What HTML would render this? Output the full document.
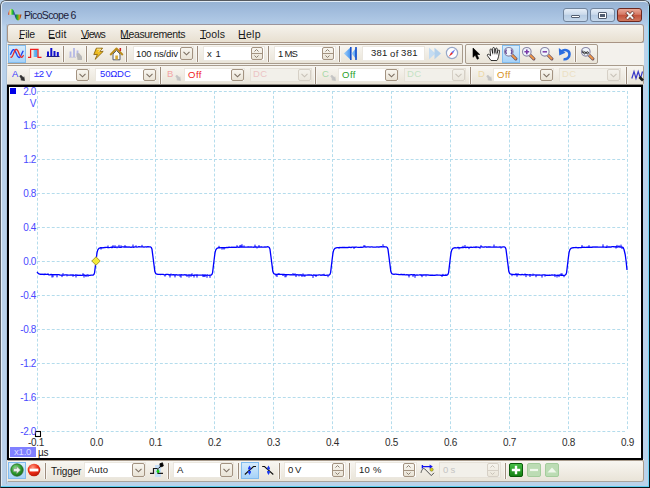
<!DOCTYPE html><html><head><meta charset="utf-8"><style>
*{margin:0;padding:0;box-sizing:border-box}
html,body{width:650px;height:488px;overflow:hidden;background:#b9d1ea}
body{font-family:"Liberation Sans",sans-serif;position:relative}
.a{position:absolute}
.lbl{position:absolute;font-size:10px;white-space:nowrap;line-height:12px;letter-spacing:-0.3px}
.tb{position:absolute;border:1px solid #a89b8c;border-radius:2px;background:linear-gradient(#f8f6f1,#efebe2 60%,#e9e4d8)}
.hl{position:absolute;border:1px solid #82bcee;background:linear-gradient(#d6ecfc,#a6d2f8)}
.yl{position:absolute;font-size:10px;color:#4a4aff;text-align:right;width:30px;letter-spacing:-0.4px;line-height:12px}
.xl{position:absolute;font-size:10px;color:#2c2c2c;letter-spacing:-0.3px;width:30px;text-align:center;line-height:12px}
.mi{position:absolute;top:28px;font-size:10.5px;color:#1a1a1a;letter-spacing:-0.35px;line-height:12px}
</style></head><body>
<div class="a" style="left:0;top:0;width:650px;height:488px;border:1px solid #565a60;border-bottom-color:#0c1418;border-right-color:#0c1418;border-radius:6px 6px 0 0;background:linear-gradient(#97b3d3 1px,#9fbadb 8px,#b1cae6 22px,#bad2ea 26px,#bad2ea)"></div><div class="a" style="left:1px;top:1px;width:648px;height:486px;border:1px solid #e2ecf6;border-bottom:none;border-right:none;border-radius:5px 5px 0 0"></div><div class="a" style="left:648px;top:6px;width:1px;height:481px;background:linear-gradient(#a8d8f0,#6fd6f6 20px)"></div><div class="a" style="left:1px;top:486px;width:648px;height:1px;background:#5ccff2"></div><div class="a" style="left:6px;top:24px;width:1px;height:460px;background:#a9c0d8"></div><svg class="a" style="left:7px;top:7px" width="16" height="16" viewBox="0 0 16 16">
<defs><linearGradient id="rg1" x1="0" x2="1" y1="0" y2="0"><stop offset="0" stop-color="#b81010"/><stop offset="0.3" stop-color="#f4eca0"/><stop offset="0.62" stop-color="#28c828"/><stop offset="1" stop-color="#1828b0"/></linearGradient>
<linearGradient id="rg2" x1="0" x2="1" y1="0" y2="0"><stop offset="0" stop-color="#1828b0"/><stop offset="0.38" stop-color="#20b020"/><stop offset="0.7" stop-color="#d0a020"/><stop offset="1" stop-color="#a01010"/></linearGradient></defs>
<path d="M1 7.8 C2 -0.2 6.8 -0.2 8 7.8 Z" fill="url(#rg1)"/><path d="M7.5 7.5 C8.6 15.4 13.6 15.4 14.4 7.5 Z" fill="url(#rg2)"/></svg><div class="a" style="left:24px;top:9px;font-size:10.5px;letter-spacing:-0.65px;line-height:12px;white-space:nowrap;color:#1c1c3a;">PicoScope 6</div><div class="a" style="left:563px;top:8px;width:25px;height:14px;border:1px solid #71849c;border-radius:3px;background:linear-gradient(#e6eef8,#cbdaeb 45%,#b5cbe3 50%,#c6d8eb)"><div class="a" style="left:7px;top:6px;width:9px;height:3px;background:#fff;border:1px solid #525e70;border-radius:1px"></div></div><div class="a" style="left:590px;top:8px;width:25px;height:14px;border:1px solid #71849c;border-radius:3px;background:linear-gradient(#e6eef8,#cbdaeb 45%,#b5cbe3 50%,#c6d8eb)"><div class="a" style="left:7px;top:3px;width:9px;height:7px;background:#fff;border:1px solid #525e70;border-radius:1px"><div class="a" style="left:1px;top:1px;width:5px;height:3px;background:#525e70"></div></div></div><div class="a" style="left:617px;top:8px;width:25px;height:14px;border:1px solid #6b2820;border-radius:3px;background:linear-gradient(#eaa898,#d57a66 45%,#c2503a 50%,#d0785e)"><svg class="a" style="left:7px;top:2px" width="10" height="9" viewBox="0 0 10 9"><path d="M1.5 1 L8.5 8 M8.5 1 L1.5 8" stroke="#62261c" stroke-width="3.4"/><path d="M1.8 1.2 L8.2 7.8 M8.2 1.2 L1.8 7.8" stroke="#f2f2f2" stroke-width="2"/></svg></div><div class="a" style="left:7px;top:24px;width:637px;height:19px;border:1px solid #a89484;border-top-color:#9c949a;border-radius:3px;background:linear-gradient(#f6f3ec,#ede7dc 60%,#e8e0d0)"></div><div class="a" style="left:19px;top:28px;font-size:10.5px;letter-spacing:-0.25px;line-height:12px;white-space:nowrap;color:#1a1a1a;">File</div><div class="a" style="left:19px;top:38px;width:5px;height:1px;background:#1a1a1a"></div><div class="a" style="left:48px;top:28px;font-size:10.5px;letter-spacing:0.1px;line-height:12px;white-space:nowrap;color:#1a1a1a;">Edit</div><div class="a" style="left:49px;top:38px;width:6px;height:1px;background:#1a1a1a"></div><div class="a" style="left:81px;top:28px;font-size:10.5px;letter-spacing:-0.75px;line-height:12px;white-space:nowrap;color:#1a1a1a;">Views</div><div class="a" style="left:81px;top:38px;width:7px;height:1px;background:#1a1a1a"></div><div class="a" style="left:120px;top:28px;font-size:10.5px;letter-spacing:-0.35px;line-height:12px;white-space:nowrap;color:#1a1a1a;">Measurements</div><div class="a" style="left:121px;top:38px;width:9px;height:1px;background:#1a1a1a"></div><div class="a" style="left:200px;top:28px;font-size:10.5px;letter-spacing:0.1px;line-height:12px;white-space:nowrap;color:#1a1a1a;">Tools</div><div class="a" style="left:200px;top:38px;width:6px;height:1px;background:#1a1a1a"></div><div class="a" style="left:238px;top:28px;font-size:10.5px;letter-spacing:0.35px;line-height:12px;white-space:nowrap;color:#1a1a1a;">Help</div><div class="a" style="left:239px;top:38px;width:7px;height:1px;background:#1a1a1a"></div><div class="a" style="left:7px;top:43px;width:637px;height:42px;background:#f3f1ec"></div><div class="a" style="left:7px;top:459px;width:637px;height:22px;background:#f3f1ec"></div><div class="tb" style="left:7px;top:44px;width:456px;height:20px;border-left-color:#f0ede6;border-radius:0 2px 2px 0"></div><div class="tb" style="left:465px;top:44px;width:133px;height:20px"></div><div class="hl" style="left:8px;top:45px;width:18px;height:18px"></div><svg class="a" style="left:8px;top:45px" width="18" height="18" viewBox="0 0 18 18">
<path d="M2.30,9.81 L2.80,8.71 L3.30,7.61 L3.80,6.59 L4.30,5.73 L4.80,5.10 L5.30,4.76 L5.80,4.73 L6.30,5.01 L6.80,5.58 L7.30,6.40 L7.80,7.39 L8.30,8.49 L8.80,9.59 L9.30,10.61 L9.80,11.47 L10.30,12.10 L10.80,12.44 L11.30,12.47 L11.80,12.19 L12.30,11.62 L12.80,10.80 L13.30,9.81 L13.80,8.71 L14.30,7.61 L14.80,6.59 L15.30,5.73" stroke="#2040f0" stroke-width="1.3" fill="none"/>
<path d="M2.50,12.13 L3.00,12.30 L3.50,12.13 L4.00,11.62 L4.50,10.82 L5.00,9.80 L5.50,8.66 L6.00,7.48 L6.50,6.37 L7.00,5.43 L7.50,4.74 L8.00,4.36 L8.50,4.33 L9.00,4.64 L9.50,5.27 L10.00,6.16 L10.50,7.25 L11.00,8.42 L11.50,9.58 L12.00,10.63 L12.50,11.48 L13.00,12.05 L13.50,12.29 L14.00,12.19 L14.50,11.74 L15.00,11.00 L15.50,10.02" stroke="#e82828" stroke-width="1.3" fill="none"/></svg><svg class="a" style="left:27px;top:47px" width="16" height="14" viewBox="0 0 16 14">
<defs><linearGradient id="pg" x1="0" x2="1"><stop offset="0" stop-color="#ffffff" stop-opacity="0"/><stop offset="0.5" stop-color="#70b8f0"/><stop offset="1" stop-color="#40a0e8"/></linearGradient></defs>
<rect x="4.5" y="3" width="6" height="7" fill="url(#pg)"/>
<path d="M1 10.3 H3.6 V2.3 H11 V10.3 H14.5" stroke="#f02020" stroke-width="1.25" fill="none"/></svg><svg class="a" style="left:45px;top:47px" width="16" height="14" viewBox="0 0 16 14">
<path d="M3 9 V4.5 M6.3 9 V1 M9.5 9 V4 M12.8 9 V5" stroke="#1010d0" stroke-width="2"/><path d="M1.5 9.5 H14.5" stroke="#202080" stroke-width="1"/></svg><div class="a" style="left:62px;top:46px;width:3px;height:16px;border-left:1px solid #f8f6f2;border-right:1px solid #f8f6f2;background:#9c8c7c"></div><svg class="a" style="left:68px;top:47px" width="16" height="14" viewBox="0 0 16 14">
<path d="M2.5 10 V4.5 M6 10 V1 M9.5 10 V3.5" stroke="#b4b8e6" stroke-width="1.8"/><path d="M1 10.3 H8" stroke="#c0c0d8" stroke-width="0.8"/>
<path d="M8.5 6.5 L11 6 L14 9.5 L14 13 L9.5 13 Z" fill="#b8b8b8"/></svg><div class="a" style="left:85px;top:46px;width:3px;height:16px;border-left:1px solid #f8f6f2;border-right:1px solid #f8f6f2;background:#9c8c7c"></div><svg class="a" style="left:92px;top:47px" width="13" height="13" viewBox="0 0 13 13">
<path d="M4.3 1.2 L10.6 1.2 L7.6 4.4 L11.2 4.4 L3.2 12.3 L5.4 7.4 L1.8 7.6 Z" fill="#eebc20" stroke="#8a6410" stroke-width="0.9" stroke-linejoin="round"/>
<path d="M5 2.2 L8.8 2.2 L6.6 5" stroke="#fff8c8" stroke-width="0.8" fill="none"/></svg><svg class="a" style="left:109px;top:47px" width="15" height="14" viewBox="0 0 15 14">
<path d="M4 12.8 V7 L7.5 3.5 L11 7 V12.8 Z" fill="#fbfbf6" stroke="#505a70" stroke-width="1"/>
<path d="M1.2 8 L7.5 1.5 L13.8 8" stroke="#b88a18" stroke-width="1.8" fill="none" stroke-linejoin="round"/>
<rect x="6.3" y="8.5" width="2.6" height="4" fill="#d8a830"/><rect x="10.5" y="1" width="1.6" height="3" fill="#d02020"/></svg><div class="a" style="left:125px;top:46px;width:3px;height:16px;border-left:1px solid #f8f6f2;border-right:1px solid #f8f6f2;background:#9c8c7c"></div><div class="a" style="left:133px;top:46px;width:61px;height:15px;background:#fff;border:1px solid #ebe7df"></div><div class="a" style="left:136px;top:48px;font-size:9.5px;letter-spacing:-0.15px;line-height:12px;white-space:nowrap;color:#1a1a1a;">100 ns/div</div><div class="a" style="left:180px;top:47px;width:13px;height:13px;border:1px solid #a39381;border-radius:2px;background:linear-gradient(#f8f6f0,#e9e3d6)"><svg class="a" style="left:2px;top:3px" width="7" height="5" viewBox="0 0 7 5"><path d="M0.5 0.8 L3.5 3.8 L6.5 0.8" stroke="#7c6f62" stroke-width="1.1" fill="none"/></svg></div><div class="a" style="left:196px;top:46px;width:3px;height:16px;border-left:1px solid #f8f6f2;border-right:1px solid #f8f6f2;background:#9c8c7c"></div><div class="a" style="left:203px;top:46px;width:62px;height:15px;background:#fff;border:1px solid #ebe7df"></div><div class="a" style="left:207px;top:48px;font-size:9.5px;letter-spacing:0.5px;line-height:12px;white-space:nowrap;color:#1a1a1a;">x 1</div><div class="a" style="left:251px;top:47px;width:12px;height:13px;border:1px solid #a39381;border-radius:2px;background:linear-gradient(#f8f6f0,#e9e3d6)"><div class="a" style="left:0;top:5px;width:10px;height:1px;background:#a39381"></div><svg class="a" style="left:2px;top:1px" width="5" height="3" viewBox="0 0 5 3"><path d="M0.5 2.5 L2.5 0.5 L4.5 2.5" stroke="#8c8072" stroke-width="1" fill="none"/></svg><svg class="a" style="left:2px;top:7px" width="5" height="3" viewBox="0 0 5 3"><path d="M0.5 0.5 L2.5 2.5 L4.5 0.5" stroke="#8c8072" stroke-width="1" fill="none"/></svg></div><div class="a" style="left:267px;top:46px;width:3px;height:16px;border-left:1px solid #f8f6f2;border-right:1px solid #f8f6f2;background:#9c8c7c"></div><div class="a" style="left:274px;top:46px;width:62px;height:15px;background:#fff;border:1px solid #ebe7df"></div><div class="a" style="left:278px;top:48px;font-size:9.5px;letter-spacing:-0.75px;line-height:12px;white-space:nowrap;color:#1a1a1a;">1 MS</div><div class="a" style="left:322px;top:47px;width:12px;height:13px;border:1px solid #a39381;border-radius:2px;background:linear-gradient(#f8f6f0,#e9e3d6)"><div class="a" style="left:0;top:5px;width:10px;height:1px;background:#a39381"></div><svg class="a" style="left:2px;top:1px" width="5" height="3" viewBox="0 0 5 3"><path d="M0.5 2.5 L2.5 0.5 L4.5 2.5" stroke="#8c8072" stroke-width="1" fill="none"/></svg><svg class="a" style="left:2px;top:7px" width="5" height="3" viewBox="0 0 5 3"><path d="M0.5 0.5 L2.5 2.5 L4.5 0.5" stroke="#8c8072" stroke-width="1" fill="none"/></svg></div><div class="a" style="left:338px;top:46px;width:3px;height:16px;border-left:1px solid #f8f6f2;border-right:1px solid #f8f6f2;background:#9c8c7c"></div><svg class="a" style="left:343px;top:46px" width="15" height="15" viewBox="0 0 15 15">
<defs><linearGradient id="ab" x1="0" x2="1" y1="0" y2="0"><stop offset="0" stop-color="#a8d4f8"/><stop offset="1" stop-color="#3c8ef0"/></linearGradient></defs>
<path d="M0.8 7.5 L8 1 V14 Z" fill="url(#ab)"/><path d="M7 1 H8.6 V14 H7 Z" fill="#1850c8"/>
<path d="M8.6 7.5 L13.5 1.5 V13.5 Z" fill="url(#ab)"/><path d="M12.2 1 H13.8 V14 H12.2 Z" fill="#1850c8"/></svg><div class="a" style="left:362px;top:46px;width:63px;height:15px;background:#fff;border:1px solid #ebe7df"></div><div class="a" style="left:371px;top:47px;font-size:9.5px;letter-spacing:0.25px;line-height:12px;white-space:nowrap;color:#1a1a1a;">381</div><div class="a" style="left:390px;top:48px;font-size:9.5px;letter-spacing:0.5px;line-height:12px;white-space:nowrap;color:#1a1a1a;">of</div><div class="a" style="left:401px;top:47px;font-size:9.5px;letter-spacing:0.4px;line-height:12px;white-space:nowrap;color:#1a1a1a;">381</div><svg class="a" style="left:428px;top:47px" width="15" height="13" viewBox="0 0 15 13">
<path d="M1 0.8 L7.5 6.5 L1 12.2 Z" fill="#c4dcf2"/><path d="M6.5 0.8 L13 6.5 L6.5 12.2 Z" fill="#b2d0ec"/></svg><svg class="a" style="left:445px;top:46px" width="14" height="14" viewBox="0 0 14 14">
<circle cx="7" cy="7" r="5.6" fill="#fdfdff" stroke="#98a8c8" stroke-width="1.2"/>
<path d="M10.3 3.3 L7.8 7.8 L6.2 6.2 Z" fill="#6070e8"/><path d="M3.7 10.7 L6.2 6.2 L7.8 7.8 Z" fill="#e82828"/></svg><svg class="a" style="left:472px;top:47px" width="9" height="14" viewBox="0 0 9 14">
<path d="M1 1 V10.3 L3.2 8.2 L5.2 12.3 L6.8 11.5 L4.9 7.5 L7.8 7.5 Z" fill="#000" stroke="#000" stroke-width="0.6" stroke-linejoin="round"/></svg><svg class="a" style="left:486px;top:46px" width="15" height="16" viewBox="0 0 15 16">
<path d="M5 14.5 L1.5 9.8 C0.8 8.8 2 7.6 3 8.5 L4.6 9.8 L4 4 C3.9 2.8 5.6 2.5 5.9 3.7 L6.7 7 L6.7 2.4 C6.7 1.2 8.5 1.2 8.6 2.4 L8.9 6.8 L9.6 2.8 C9.8 1.7 11.4 1.9 11.3 3.1 L11 7.3 L12 4.6 C12.4 3.6 13.9 3.9 13.6 5.1 L12.6 10.3 C12.1 12.6 11.3 14.5 10.9 14.5 Z" fill="#fff" stroke="#111" stroke-width="0.85" stroke-linejoin="round"/>
<path d="M6.7 7 V8.3 M8.9 6.8 V8.3 M11 7.3 V8.5" stroke="#111" stroke-width="0.7"/></svg><div class="hl" style="left:502px;top:45px;width:18px;height:18px"></div><svg class="a" style="left:503px;top:46px" width="15" height="15" viewBox="0 0 15 15">
<path d="M8.6 8.6 L12.8 12.8" stroke="#6a5060" stroke-width="3.2" stroke-linecap="round"/><path d="M8.6 8.6 L12.6 12.6" stroke="#f09848" stroke-width="2" stroke-linecap="round"/>
<circle cx="5.8" cy="5.8" r="4.3" fill="#f0f6fd" stroke="#8a88a8" stroke-width="1.15"/><path d="M3.4 3.6 L2.6 5.8 L3.4 8 M8.2 3.6 L9 5.8 L8.2 8" stroke="#6a4a98" stroke-width="1.4" fill="none"/></svg><svg class="a" style="left:521px;top:46px" width="15" height="15" viewBox="0 0 15 15">
<path d="M8.6 8.6 L12.8 12.8" stroke="#6a5060" stroke-width="3.2" stroke-linecap="round"/><path d="M8.6 8.6 L12.6 12.6" stroke="#f09848" stroke-width="2" stroke-linecap="round"/>
<circle cx="5.8" cy="5.8" r="4.3" fill="#f0f6fd" stroke="#8a88a8" stroke-width="1.15"/><path d="M3.4 5.8 H8.2 M5.8 3.4 V8.2" stroke="#7a3aa8" stroke-width="1.6"/></svg><svg class="a" style="left:539px;top:46px" width="15" height="15" viewBox="0 0 15 15">
<path d="M8.6 8.6 L12.8 12.8" stroke="#6a5060" stroke-width="3.2" stroke-linecap="round"/><path d="M8.6 8.6 L12.6 12.6" stroke="#f09848" stroke-width="2" stroke-linecap="round"/>
<circle cx="5.8" cy="5.8" r="4.3" fill="#f0f6fd" stroke="#8a88a8" stroke-width="1.15"/><path d="M3.6 5.8 H8" stroke="#7a3aa8" stroke-width="1.5"/></svg><svg class="a" style="left:558px;top:46px" width="14" height="15" viewBox="0 0 14 15">
<path d="M3.5 5.5 C6 3 11.5 3.5 11.5 8.2 C11.5 11.8 8.5 13.8 5.5 13.2" stroke="#2c6ee0" stroke-width="2.6" fill="none"/><path d="M0.8 2 L1.2 9.5 L7.5 6.8 Z" fill="#2c6ee0"/></svg><div class="a" style="left:574px;top:46px;width:3px;height:16px;border-left:1px solid #f8f6f2;border-right:1px solid #f8f6f2;background:#9c8c7c"></div><svg class="a" style="left:580px;top:46px" width="15" height="15" viewBox="0 0 15 15">
<path d="M8.6 8.6 L12.8 12.8" stroke="#6a5060" stroke-width="3.2" stroke-linecap="round"/><path d="M8.6 8.6 L12.6 12.6" stroke="#f09848" stroke-width="2" stroke-linecap="round"/>
<circle cx="5.8" cy="5.8" r="4.3" fill="#f0f6fd" stroke="#8a88a8" stroke-width="1.15"/><path d="M2.8 4.6 V7 M4.6 5.8 a0.9 1.1 0 1 0 0.01 0 M7.4 5.8 a0.9 1.1 0 1 0 0.01 0" stroke="#202020" stroke-width="1" fill="none"/></svg><div class="tb" style="left:7px;top:65px;width:637px;height:20px;border-left-color:#f0ede6;border-bottom-color:#c8beb0;border-radius:0 2px 2px 0"></div><div class="a" style="left:12px;top:68px;font-size:9.5px;letter-spacing:0.5px;line-height:12px;white-space:nowrap;color:#3a3aff;">A</div><svg class="a" style="left:19px;top:75px" width="6" height="6" viewBox="0 0 7 7"><path d="M0.8 1.2 L2.2 0 L5 2.8 L5.8 2 L6.6 6.6 L2 5.8 L2.8 5 Z" fill="#333" stroke="#333" stroke-width="0.6" stroke-linejoin="round"/></svg><div class="a" style="left:29px;top:68px;width:61px;height:14px;background:#fff;border:1px solid #ebe7df"></div><div class="a" style="left:34px;top:68px;font-size:9.5px;letter-spacing:-0.45px;line-height:12px;white-space:nowrap;color:#2828ff;">&plusmn;2 V</div><div class="a" style="left:76px;top:69px;width:13px;height:12px;border:1px solid #a39381;border-radius:2px;background:linear-gradient(#f8f6f0,#e9e3d6)"><svg class="a" style="left:2px;top:3px" width="7" height="5" viewBox="0 0 7 5"><path d="M0.5 0.8 L3.5 3.8 L6.5 0.8" stroke="#7c6f62" stroke-width="1.1" fill="none"/></svg></div><div class="a" style="left:95px;top:68px;width:62px;height:14px;background:#fff;border:1px solid #ebe7df"></div><div class="a" style="left:100px;top:68px;font-size:9.5px;letter-spacing:-0.15px;line-height:12px;white-space:nowrap;color:#2828ff;">50&Omega;</div><div class="a" style="left:117px;top:68px;font-size:9.5px;letter-spacing:0.1px;line-height:12px;white-space:nowrap;color:#2828ff;">DC</div><div class="a" style="left:143px;top:69px;width:13px;height:12px;border:1px solid #a39381;border-radius:2px;background:linear-gradient(#f8f6f0,#e9e3d6)"><svg class="a" style="left:2px;top:3px" width="7" height="5" viewBox="0 0 7 5"><path d="M0.5 0.8 L3.5 3.8 L6.5 0.8" stroke="#7c6f62" stroke-width="1.1" fill="none"/></svg></div><div class="a" style="left:159px;top:67px;width:3px;height:17px;border-left:1px solid #f8f6f2;border-right:1px solid #f8f6f2;background:#9c8c7c"></div><div class="a" style="left:167px;top:68px;font-size:9.5px;letter-spacing:0.5px;line-height:12px;white-space:nowrap;color:#f2a4a4;">B</div><svg class="a" style="left:175px;top:75px" width="6" height="6" viewBox="0 0 7 7"><path d="M0.8 1.2 L2.2 0 L5 2.8 L5.8 2 L6.6 6.6 L2 5.8 L2.8 5 Z" fill="#c4c4c4" stroke="#c4c4c4" stroke-width="0.6" stroke-linejoin="round"/></svg><div class="a" style="left:184px;top:68px;width:61px;height:14px;background:#fff;border:1px solid #ebe7df"></div><div class="a" style="left:188px;top:69px;font-size:9.5px;letter-spacing:0.5px;line-height:12px;white-space:nowrap;color:#f01818;">Off</div><div class="a" style="left:231px;top:69px;width:13px;height:12px;border:1px solid #a39381;border-radius:2px;background:linear-gradient(#f8f6f0,#e9e3d6)"><svg class="a" style="left:2px;top:3px" width="7" height="5" viewBox="0 0 7 5"><path d="M0.5 0.8 L3.5 3.8 L6.5 0.8" stroke="#7c6f62" stroke-width="1.1" fill="none"/></svg></div><div class="a" style="left:250px;top:68px;width:62px;height:14px;background:#f2f0ea;border:1px solid #e6e1d8"></div><div class="a" style="left:253px;top:68px;font-size:9.5px;letter-spacing:0.4px;line-height:12px;white-space:nowrap;color:#ecc4c4;">DC</div><div class="a" style="left:298px;top:69px;width:13px;height:12px;border:1px solid #d6d0c6;border-radius:2px;background:linear-gradient(#f4f2ec,#ebe7de)"><svg class="a" style="left:2px;top:3px" width="7" height="5" viewBox="0 0 7 5"><path d="M0.5 0.8 L3.5 3.8 L6.5 0.8" stroke="#c8c2b8" stroke-width="1.1" fill="none"/></svg></div><div class="a" style="left:314px;top:67px;width:3px;height:17px;border-left:1px solid #f8f6f2;border-right:1px solid #f8f6f2;background:#9c8c7c"></div><div class="a" style="left:322px;top:68px;font-size:9.5px;letter-spacing:0.5px;line-height:12px;white-space:nowrap;color:#a8d8a8;">C</div><svg class="a" style="left:330px;top:75px" width="6" height="6" viewBox="0 0 7 7"><path d="M0.8 1.2 L2.2 0 L5 2.8 L5.8 2 L6.6 6.6 L2 5.8 L2.8 5 Z" fill="#c4c4c4" stroke="#c4c4c4" stroke-width="0.6" stroke-linejoin="round"/></svg><div class="a" style="left:338px;top:68px;width:61px;height:14px;background:#fff;border:1px solid #ebe7df"></div><div class="a" style="left:342px;top:69px;font-size:9.5px;letter-spacing:0.5px;line-height:12px;white-space:nowrap;color:#28a028;">Off</div><div class="a" style="left:385px;top:69px;width:13px;height:12px;border:1px solid #a39381;border-radius:2px;background:linear-gradient(#f8f6f0,#e9e3d6)"><svg class="a" style="left:2px;top:3px" width="7" height="5" viewBox="0 0 7 5"><path d="M0.5 0.8 L3.5 3.8 L6.5 0.8" stroke="#7c6f62" stroke-width="1.1" fill="none"/></svg></div><div class="a" style="left:404px;top:68px;width:62px;height:14px;background:#f2f0ea;border:1px solid #e6e1d8"></div><div class="a" style="left:407px;top:68px;font-size:9.5px;letter-spacing:0.4px;line-height:12px;white-space:nowrap;color:#c4e2c4;">DC</div><div class="a" style="left:452px;top:69px;width:13px;height:12px;border:1px solid #d6d0c6;border-radius:2px;background:linear-gradient(#f4f2ec,#ebe7de)"><svg class="a" style="left:2px;top:3px" width="7" height="5" viewBox="0 0 7 5"><path d="M0.5 0.8 L3.5 3.8 L6.5 0.8" stroke="#c8c2b8" stroke-width="1.1" fill="none"/></svg></div><div class="a" style="left:469px;top:67px;width:3px;height:17px;border-left:1px solid #f8f6f2;border-right:1px solid #f8f6f2;background:#9c8c7c"></div><div class="a" style="left:478px;top:68px;font-size:9.5px;letter-spacing:0.5px;line-height:12px;white-space:nowrap;color:#ecd8a8;">D</div><svg class="a" style="left:486px;top:75px" width="6" height="6" viewBox="0 0 7 7"><path d="M0.8 1.2 L2.2 0 L5 2.8 L5.8 2 L6.6 6.6 L2 5.8 L2.8 5 Z" fill="#c4c4c4" stroke="#c4c4c4" stroke-width="0.6" stroke-linejoin="round"/></svg><div class="a" style="left:493px;top:68px;width:61px;height:14px;background:#fff;border:1px solid #ebe7df"></div><div class="a" style="left:497px;top:69px;font-size:9.5px;letter-spacing:0.5px;line-height:12px;white-space:nowrap;color:#d89018;">Off</div><div class="a" style="left:540px;top:69px;width:13px;height:12px;border:1px solid #a39381;border-radius:2px;background:linear-gradient(#f8f6f0,#e9e3d6)"><svg class="a" style="left:2px;top:3px" width="7" height="5" viewBox="0 0 7 5"><path d="M0.5 0.8 L3.5 3.8 L6.5 0.8" stroke="#7c6f62" stroke-width="1.1" fill="none"/></svg></div><div class="a" style="left:559px;top:68px;width:62px;height:14px;background:#f2f0ea;border:1px solid #e6e1d8"></div><div class="a" style="left:562px;top:68px;font-size:9.5px;letter-spacing:0.4px;line-height:12px;white-space:nowrap;color:#ece0c4;">DC</div><div class="a" style="left:607px;top:69px;width:13px;height:12px;border:1px solid #d6d0c6;border-radius:2px;background:linear-gradient(#f4f2ec,#ebe7de)"><svg class="a" style="left:2px;top:3px" width="7" height="5" viewBox="0 0 7 5"><path d="M0.5 0.8 L3.5 3.8 L6.5 0.8" stroke="#c8c2b8" stroke-width="1.1" fill="none"/></svg></div><div class="a" style="left:625px;top:67px;width:3px;height:17px;border-left:1px solid #f8f6f2;border-right:1px solid #f8f6f2;background:#9c8c7c"></div><svg class="a" style="left:631px;top:69px" width="13" height="13" viewBox="0 0 13 13">
<path d="M0.8 9.5 L3 2.5 L5 9.5 L7.2 2.5 L9.5 9.5 L11.5 2.5" stroke="#3838c8" stroke-width="1.2" fill="none"/><path d="M8.5 8 L12 11.5" stroke="#202020" stroke-width="2.6"/></svg><div class="a" style="left:7px;top:84px;width:636px;height:1px;background:#8a8680"></div><div class="a" style="left:7px;top:85px;width:636px;height:375px;border:2px solid #000;background:#fff"></div><svg class="a" style="left:0;top:0" width="650" height="488" viewBox="0 0 650 488"><g stroke="#b4dcec" stroke-width="1" fill="none"><path d="M37.5 91 V431" stroke-dasharray="2.9143 1.9429"/><path d="M96.5 91 V431" stroke-dasharray="2.9143 1.9429"/><path d="M155.5 91 V431" stroke-dasharray="2.9143 1.9429"/><path d="M214.5 91 V431" stroke-dasharray="2.9143 1.9429"/><path d="M273.5 91 V431" stroke-dasharray="2.9143 1.9429"/><path d="M332.5 91 V431" stroke-dasharray="2.9143 1.9429"/><path d="M391.5 91 V431" stroke-dasharray="2.9143 1.9429"/><path d="M450.5 91 V431" stroke-dasharray="2.9143 1.9429"/><path d="M509.5 91 V431" stroke-dasharray="2.9143 1.9429"/><path d="M568.5 91 V431" stroke-dasharray="2.9143 1.9429"/><path d="M627.5 91 V431" stroke-dasharray="2.9143 1.9429"/><path d="M37 91.5 H627" stroke-dasharray="2.9500 1.9667"/><path d="M37 125.5 H627" stroke-dasharray="2.9500 1.9667"/><path d="M37 159.5 H627" stroke-dasharray="2.9500 1.9667"/><path d="M37 193.5 H627" stroke-dasharray="2.9500 1.9667"/><path d="M37 227.5 H627" stroke-dasharray="2.9500 1.9667"/><path d="M37 261.5 H627" stroke-dasharray="2.9500 1.9667"/><path d="M37 295.5 H627" stroke-dasharray="2.9500 1.9667"/><path d="M37 329.5 H627" stroke-dasharray="2.9500 1.9667"/><path d="M37 363.5 H627" stroke-dasharray="2.9500 1.9667"/><path d="M37 397.5 H627" stroke-dasharray="2.9500 1.9667"/><path d="M37 431.5 H627" stroke-dasharray="2.9500 1.9667"/></g><path d="M37.0,271.80 L37.8,273.00 L39.0,273.90 L40.5,274.40 L41.0,274.03 L42.0,274.32 L43.0,274.17 L44.0,274.52 L45.0,274.41 L46.0,274.39 L47.0,274.28 L48.0,274.40 L49.0,274.83 L50.0,274.80 L51.0,274.41 L52.0,274.68 L53.0,274.65 L54.0,274.55 L55.0,274.74 L56.0,274.72 L57.0,274.66 L58.0,274.71 L59.0,274.72 L60.0,275.08 L61.0,275.04 L62.0,275.04 L63.0,275.10 L64.0,275.15 L65.0,274.91 L66.0,274.93 L67.0,274.95 L68.0,275.12 L69.0,275.03 L70.0,275.07 L71.0,274.91 L72.0,275.09 L73.0,274.91 L74.0,275.30 L75.0,275.14 L76.0,274.90 L77.0,275.25 L78.0,275.21 L79.0,275.32 L80.0,275.08 L81.0,275.37 L82.0,275.33 L83.0,275.09 L84.0,274.98 L85.0,275.30 L86.0,275.33 L87.0,275.06 L88.0,275.01 L89.0,275.38 L90.0,275.30 L91.0,275.06 L92.0,275.20 L93.2,275.10 L94.0,274.30 L94.6,272.60 L96.2,259.00 L97.0,252.80 L97.8,249.80 L98.9,248.30 L100.2,247.85 L101.0,247.56 L102.0,247.90 L103.0,247.75 L104.0,247.69 L105.0,247.51 L106.0,247.46 L107.0,247.29 L108.0,247.72 L109.0,247.53 L110.0,247.47 L111.0,247.35 L112.0,247.57 L113.0,247.13 L114.0,247.13 L115.0,247.36 L116.0,247.18 L117.0,247.10 L118.0,247.16 L119.0,247.22 L120.0,247.37 L121.0,247.31 L122.0,246.93 L123.0,246.97 L124.0,246.99 L125.0,247.01 L126.0,246.99 L127.0,246.97 L128.0,247.09 L129.0,246.85 L130.0,247.04 L131.0,247.26 L132.0,247.12 L133.0,247.04 L134.0,247.24 L135.0,246.90 L136.0,246.79 L137.0,247.14 L138.0,246.95 L139.0,246.72 L140.0,246.93 L141.0,246.90 L142.0,246.81 L143.0,246.82 L144.0,247.10 L145.0,246.91 L146.0,246.87 L147.0,246.99 L148.0,246.71 L149.0,246.91 L150.5,246.90 L151.3,247.50 L152.0,249.30 L154.9,271.80 L155.8,273.60 L156.9,274.20 L158.0,274.41 L159.0,274.34 L160.0,274.41 L161.0,274.48 L162.0,274.30 L163.0,274.41 L164.0,274.67 L165.0,274.79 L166.0,274.49 L167.0,274.45 L168.0,274.45 L169.0,274.91 L170.0,274.70 L171.0,274.85 L172.0,274.85 L173.0,274.68 L174.0,274.74 L175.0,275.02 L176.0,274.72 L177.0,274.78 L178.0,275.13 L179.0,274.90 L180.0,274.84 L181.0,274.85 L182.0,274.74 L183.0,275.21 L184.0,274.77 L185.0,274.79 L186.0,275.13 L187.0,275.07 L188.0,275.03 L189.0,275.00 L190.0,275.24 L191.0,274.86 L192.0,275.12 L193.0,275.27 L194.0,275.30 L195.0,274.91 L196.0,275.25 L197.0,274.98 L198.0,275.19 L199.0,275.13 L200.0,275.07 L201.0,275.08 L202.0,275.22 L203.0,274.95 L204.0,275.26 L205.0,274.95 L206.0,275.27 L207.0,275.01 L208.0,275.21 L209.0,275.28 L210.0,275.20 L211.2,275.10 L212.0,274.30 L212.6,272.60 L214.2,259.00 L215.0,252.80 L215.8,249.80 L216.9,248.30 L218.2,247.85 L219.0,247.66 L220.0,247.76 L221.0,247.54 L222.0,247.65 L223.0,247.76 L224.0,247.66 L225.0,247.73 L226.0,247.70 L227.0,247.40 L228.0,247.64 L229.0,247.15 L230.0,247.42 L231.0,247.47 L232.0,247.14 L233.0,247.30 L234.0,247.12 L235.0,247.27 L236.0,247.34 L237.0,247.13 L238.0,247.02 L239.0,247.32 L240.0,246.96 L241.0,247.17 L242.0,246.97 L243.0,247.11 L244.0,247.09 L245.0,247.04 L246.0,247.20 L247.0,247.13 L248.0,247.00 L249.0,247.02 L250.0,247.04 L251.0,246.78 L252.0,247.05 L253.0,247.11 L254.0,247.23 L255.0,246.93 L256.0,247.01 L257.0,247.21 L258.0,247.08 L259.0,246.94 L260.0,247.11 L261.0,246.92 L262.0,247.00 L263.0,247.03 L264.0,247.05 L265.0,246.80 L266.0,247.07 L267.0,246.77 L268.5,246.90 L269.3,247.50 L270.0,249.30 L272.9,271.80 L273.8,273.60 L274.9,274.20 L276.0,274.41 L277.0,274.34 L278.0,274.21 L279.0,274.27 L280.0,274.42 L281.0,274.33 L282.0,274.43 L283.0,274.48 L284.0,274.37 L285.0,274.58 L286.0,274.73 L287.0,274.74 L288.0,274.72 L289.0,274.69 L290.0,274.84 L291.0,274.72 L292.0,274.89 L293.0,274.86 L294.0,274.63 L295.0,274.87 L296.0,274.95 L297.0,274.76 L298.0,274.86 L299.0,274.82 L300.0,274.80 L301.0,275.17 L302.0,275.02 L303.0,275.15 L304.0,275.05 L305.0,275.09 L306.0,275.09 L307.0,275.08 L308.0,274.83 L309.0,274.99 L310.0,275.02 L311.0,274.87 L312.0,275.31 L313.0,275.16 L314.0,274.91 L315.0,275.27 L316.0,275.15 L317.0,275.23 L318.0,275.09 L319.0,274.93 L320.0,274.96 L321.0,275.31 L322.0,274.99 L323.0,274.98 L324.0,275.15 L325.0,275.36 L326.0,275.28 L327.0,275.18 L328.0,275.12 L329.2,275.10 L330.0,274.30 L330.6,272.60 L332.2,259.00 L333.0,252.80 L333.8,249.80 L334.9,248.30 L336.2,247.85 L337.0,247.70 L338.0,247.59 L339.0,247.66 L340.0,247.51 L341.0,247.53 L342.0,247.43 L343.0,247.51 L344.0,247.51 L345.0,247.35 L346.0,247.59 L347.0,247.39 L348.0,247.56 L349.0,247.16 L350.0,247.45 L351.0,247.52 L352.0,247.14 L353.0,247.15 L354.0,247.46 L355.0,247.26 L356.0,247.06 L357.0,247.22 L358.0,247.29 L359.0,247.33 L360.0,247.35 L361.0,247.20 L362.0,247.32 L363.0,247.04 L364.0,246.96 L365.0,246.87 L366.0,247.02 L367.0,246.80 L368.0,246.83 L369.0,246.91 L370.0,247.11 L371.0,246.94 L372.0,246.79 L373.0,247.08 L374.0,247.21 L375.0,247.03 L376.0,247.06 L377.0,246.77 L378.0,247.17 L379.0,247.01 L380.0,246.83 L381.0,246.68 L382.0,246.76 L383.0,246.78 L384.0,246.76 L385.0,246.94 L386.5,246.90 L387.3,247.50 L388.0,249.30 L390.9,271.80 L391.8,273.60 L392.9,274.20 L394.0,274.39 L395.0,274.11 L396.0,274.12 L397.0,274.28 L398.0,274.28 L399.0,274.61 L400.0,274.63 L401.0,274.42 L402.0,274.49 L403.0,274.81 L404.0,274.45 L405.0,274.90 L406.0,274.82 L407.0,274.59 L408.0,275.02 L409.0,275.01 L410.0,274.82 L411.0,274.68 L412.0,274.68 L413.0,275.00 L414.0,274.73 L415.0,274.99 L416.0,275.18 L417.0,275.00 L418.0,275.03 L419.0,274.96 L420.0,274.85 L421.0,275.15 L422.0,275.24 L423.0,274.95 L424.0,274.98 L425.0,274.87 L426.0,274.85 L427.0,274.96 L428.0,274.99 L429.0,275.18 L430.0,275.25 L431.0,275.03 L432.0,275.25 L433.0,275.26 L434.0,275.35 L435.0,275.23 L436.0,275.16 L437.0,274.95 L438.0,275.04 L439.0,275.13 L440.0,275.04 L441.0,275.36 L442.0,275.24 L443.0,275.42 L444.0,275.28 L445.0,275.22 L446.0,275.33 L447.2,275.10 L448.0,274.30 L448.6,272.60 L450.2,259.00 L451.0,252.80 L451.8,249.80 L452.9,248.30 L454.2,247.85 L455.0,247.76 L456.0,247.84 L457.0,247.80 L458.0,247.41 L459.0,247.55 L460.0,247.82 L461.0,247.60 L462.0,247.49 L463.0,247.66 L464.0,247.36 L465.0,247.36 L466.0,247.59 L467.0,247.18 L468.0,247.46 L469.0,247.42 L470.0,247.37 L471.0,247.03 L472.0,247.39 L473.0,247.38 L474.0,247.01 L475.0,247.32 L476.0,246.92 L477.0,247.17 L478.0,247.09 L479.0,247.33 L480.0,247.17 L481.0,246.91 L482.0,246.87 L483.0,247.13 L484.0,247.19 L485.0,246.82 L486.0,246.97 L487.0,247.25 L488.0,246.88 L489.0,246.99 L490.0,246.79 L491.0,247.06 L492.0,247.10 L493.0,247.12 L494.0,247.03 L495.0,247.06 L496.0,246.93 L497.0,247.09 L498.0,247.08 L499.0,247.07 L500.0,246.85 L501.0,247.13 L502.0,247.06 L503.0,246.81 L504.5,246.90 L505.3,247.50 L506.0,249.30 L508.9,271.80 L509.8,273.60 L510.9,274.20 L512.0,274.45 L513.0,274.36 L514.0,274.55 L515.0,274.52 L516.0,274.34 L517.0,274.61 L518.0,274.72 L519.0,274.56 L520.0,274.59 L521.0,274.83 L522.0,274.48 L523.0,274.64 L524.0,274.95 L525.0,274.71 L526.0,274.63 L527.0,274.58 L528.0,274.87 L529.0,274.88 L530.0,274.76 L531.0,274.78 L532.0,275.12 L533.0,275.10 L534.0,274.89 L535.0,274.90 L536.0,275.05 L537.0,274.81 L538.0,275.03 L539.0,274.93 L540.0,275.14 L541.0,275.08 L542.0,275.12 L543.0,274.97 L544.0,274.89 L545.0,274.92 L546.0,275.27 L547.0,275.11 L548.0,275.35 L549.0,275.21 L550.0,275.27 L551.0,275.12 L552.0,275.01 L553.0,275.21 L554.0,275.02 L555.0,275.01 L556.0,275.23 L557.0,275.39 L558.0,275.16 L559.0,275.38 L560.0,274.95 L561.0,275.26 L562.0,275.25 L563.0,275.37 L564.0,275.38 L565.2,275.10 L566.0,274.30 L566.6,272.60 L568.2,259.00 L569.0,252.80 L569.8,249.80 L570.9,248.30 L572.2,247.85 L573.0,247.76 L574.0,247.65 L575.0,247.55 L576.0,247.50 L577.0,247.53 L578.0,247.76 L579.0,247.55 L580.0,247.53 L581.0,247.53 L582.0,247.25 L583.0,247.43 L584.0,247.19 L585.0,247.31 L586.0,247.48 L587.0,247.25 L588.0,247.09 L589.0,247.25 L590.0,247.44 L591.0,247.16 L592.0,247.40 L593.0,246.92 L594.0,247.13 L595.0,246.91 L596.0,247.23 L597.0,246.94 L598.0,247.06 L599.0,247.07 L600.0,247.07 L601.0,247.21 L602.0,247.03 L603.0,246.97 L604.0,247.17 L605.0,247.19 L606.0,247.25 L607.0,247.23 L608.0,247.02 L609.0,246.99 L610.0,246.91 L611.0,247.11 L612.0,246.72 L613.0,246.70 L614.0,246.75 L615.0,246.78 L616.0,246.72 L617.0,247.14 L618.0,246.88 L619.0,246.71 L620.0,247.12 L621.0,246.97 L622.0,247.11 L623.0,247.40 L624.0,249.50 L625.2,254.50 L626.2,262.00 L627.0,270.00" stroke="#0000ff" stroke-width="1.3" fill="none" stroke-linejoin="round"/><path d="M45.0,274.41 L45.0,273.41 M48.0,274.40 L48.0,273.36 M52.0,274.68 L52.0,277.50 M53.0,274.65 L53.0,277.25 M57.0,274.66 L57.0,277.35 M62.0,275.04 L62.0,277.10 M63.0,275.10 L63.0,273.18 M67.0,274.95 L67.0,276.39 M73.0,274.91 L73.0,276.77 M76.0,274.90 L76.0,277.50 M83.0,275.09 L83.0,273.21 M84.0,274.98 L84.0,277.57 M86.0,275.33 L86.0,277.05 M88.0,275.01 L88.0,276.85 M101.0,247.56 L101.0,249.57 M108.0,247.72 L108.0,245.53 M112.0,247.57 L112.0,246.13 M113.0,247.13 L113.0,245.16 M115.0,247.36 L115.0,245.26 M117.0,247.10 L117.0,248.32 M119.0,247.22 L119.0,244.86 M121.0,247.31 L121.0,245.31 M125.0,247.01 L125.0,245.12 M133.0,247.04 L133.0,244.52 M136.0,246.79 L136.0,245.38 M142.0,246.81 L142.0,244.86 M165.0,274.79 L165.0,276.59 M170.0,274.70 L170.0,277.53 M171.0,274.85 L171.0,273.52 M175.0,275.02 L175.0,277.41 M180.0,274.84 L180.0,276.75 M181.0,274.85 L181.0,277.69 M186.0,275.13 L186.0,274.12 M187.0,275.07 L187.0,276.86 M189.0,275.00 L189.0,277.57 M191.0,274.86 L191.0,276.80 M192.0,275.12 L192.0,273.32 M194.0,275.30 L194.0,277.53 M197.0,274.98 L197.0,277.58 M203.0,274.95 L203.0,277.07 M204.0,275.26 L204.0,276.99 M205.0,274.95 L205.0,277.05 M207.0,275.01 L207.0,277.80 M210.0,275.20 L210.0,277.83 M219.0,247.66 L219.0,245.83 M222.0,247.65 L222.0,249.67 M224.0,247.66 L224.0,249.59 M237.0,247.13 L237.0,245.22 M240.0,246.96 L240.0,245.03 M241.0,247.17 L241.0,244.87 M242.0,246.97 L242.0,244.28 M244.0,247.09 L244.0,245.43 M255.0,246.93 L255.0,244.63 M257.0,247.21 L257.0,248.49 M259.0,246.94 L259.0,245.09 M276.0,274.41 L276.0,276.21 M277.0,274.34 L277.0,276.97 M279.0,274.27 L279.0,273.07 M283.0,274.48 L283.0,276.01 M285.0,274.58 L285.0,277.29 M286.0,274.73 L286.0,277.19 M293.0,274.86 L293.0,273.07 M295.0,274.87 L295.0,273.28 M296.0,274.95 L296.0,277.04 M299.0,274.82 L299.0,276.42 M301.0,275.17 L301.0,274.05 M302.0,275.02 L302.0,276.97 M303.0,275.15 L303.0,273.45 M304.0,275.05 L304.0,276.74 M305.0,275.09 L305.0,276.72 M313.0,275.16 L313.0,277.94 M316.0,275.15 L316.0,277.00 M324.0,275.15 L324.0,273.78 M328.0,275.12 L328.0,277.22 M339.0,247.66 L339.0,248.70 M354.0,247.46 L354.0,248.93 M364.0,246.96 L364.0,245.08 M365.0,246.87 L365.0,245.43 M383.0,246.78 L383.0,244.28 M409.0,275.01 L409.0,277.45 M413.0,275.00 L413.0,276.80 M415.0,274.99 L415.0,277.81 M421.0,275.15 L421.0,274.08 M422.0,275.24 L422.0,277.20 M426.0,274.85 L426.0,276.47 M442.0,275.24 L442.0,277.01 M443.0,275.42 L443.0,273.88 M446.0,275.33 L446.0,273.90 M459.0,247.55 L459.0,249.35 M463.0,247.66 L463.0,245.81 M465.0,247.36 L465.0,245.04 M469.0,247.42 L469.0,249.14 M476.0,246.92 L476.0,248.14 M480.0,247.17 L480.0,248.79 M481.0,246.91 L481.0,245.11 M494.0,247.03 L494.0,244.54 M501.0,247.13 L501.0,248.56 M512.0,274.45 L512.0,276.19 M516.0,274.34 L516.0,273.08 M517.0,274.61 L517.0,276.78 M518.0,274.72 L518.0,273.10 M525.0,274.71 L525.0,273.43 M526.0,274.63 L526.0,277.10 M530.0,274.76 L530.0,276.99 M533.0,275.10 L533.0,273.61 M536.0,275.05 L536.0,277.22 M542.0,275.12 L542.0,277.61 M545.0,274.92 L545.0,276.64 M555.0,275.01 L555.0,277.08 M557.0,275.39 L557.0,277.54 M559.0,275.38 L559.0,277.10 M561.0,275.26 L561.0,273.34 M562.0,275.25 L562.0,273.31 M564.0,275.38 L564.0,277.23 M582.0,247.25 L582.0,245.05 M589.0,247.25 L589.0,245.23 M603.0,246.97 L603.0,244.34 M607.0,247.23 L607.0,245.37 M616.0,246.72 L616.0,248.56 M617.0,247.14 L617.0,244.92 M619.0,246.71 L619.0,245.29 M621.0,246.97 L621.0,244.64 M622.0,247.11 L622.0,249.05 " stroke="#0000ff" stroke-width="1" fill="none"/><path d="M96 256.8 L100.2 261 L96 265.2 L91.8 261 Z" fill="#f4ea3a" stroke="#a89e30" stroke-width="1"/><rect x="35.5" y="431.5" width="5" height="5" fill="#fff" stroke="#000" stroke-width="1.1"/><rect x="10" y="88" width="6" height="6" fill="#0000e8"/></svg><div class="yl" style="left:6px;top:86px">2.0</div><div class="yl" style="left:6px;top:120px">1.6</div><div class="yl" style="left:6px;top:154px">1.2</div><div class="yl" style="left:6px;top:188px">0.8</div><div class="yl" style="left:6px;top:222px">0.4</div><div class="yl" style="left:6px;top:256px">0.0</div><div class="yl" style="left:6px;top:290px">-0.4</div><div class="yl" style="left:6px;top:324px">-0.8</div><div class="yl" style="left:6px;top:358px">-1.2</div><div class="yl" style="left:6px;top:392px">-1.6</div><div class="yl" style="left:6px;top:426px">-2.0</div><div class="yl" style="left:6px;top:98px">V</div><div class="xl" style="left:21.0px;top:437px">-0.1</div><div class="xl" style="left:81.5px;top:437px">0.0</div><div class="xl" style="left:140.5px;top:437px">0.1</div><div class="xl" style="left:199.5px;top:437px">0.2</div><div class="xl" style="left:258.5px;top:437px">0.3</div><div class="xl" style="left:317.5px;top:437px">0.4</div><div class="xl" style="left:376.5px;top:437px">0.5</div><div class="xl" style="left:435.5px;top:437px">0.6</div><div class="xl" style="left:494.5px;top:437px">0.7</div><div class="xl" style="left:553.5px;top:437px">0.8</div><div class="xl" style="left:612.5px;top:437px">0.9</div><div class="a" style="left:10px;top:447px;width:26px;height:10px;background:#8080ff"></div><div class="lbl" style="left:14px;top:446px;font-size:9.5px;color:#dcdcff;letter-spacing:-0.2px;line-height:11px">x1.0</div><div class="lbl" style="left:38px;top:447px;font-size:10px;color:#1a1a1a;line-height:12px">&micro;s</div><div class="tb" style="left:7px;top:460px;width:637px;height:22px;border-left-color:#f0ede6;border-bottom-color:#a8a49e;border-radius:0 2px 3px 0"></div><div class="hl" style="left:8px;top:462px;width:18px;height:17px"></div><svg class="a" style="left:10px;top:463px" width="14" height="14" viewBox="0 0 14 14">
<defs><radialGradient id="gg" cx="0.4" cy="0.35" r="0.7"><stop offset="0" stop-color="#8ce08c"/><stop offset="0.6" stop-color="#2a9a2a"/><stop offset="1" stop-color="#1a6a1a"/></radialGradient></defs>
<circle cx="7" cy="7" r="6.2" fill="url(#gg)" stroke="#2a6a2a" stroke-width="0.8"/><path d="M3.5 5.6 H6.6 V3.2 L10.6 7 L6.6 10.8 V8.4 H3.5 Z" fill="#eef2ee" stroke="#708070" stroke-width="0.5"/></svg><svg class="a" style="left:27px;top:463px" width="14" height="14" viewBox="0 0 14 14">
<defs><radialGradient id="rr" cx="0.4" cy="0.3" r="0.75"><stop offset="0" stop-color="#ff9a80"/><stop offset="0.55" stop-color="#ec2a14"/><stop offset="1" stop-color="#b01808"/></radialGradient></defs>
<circle cx="7" cy="7" r="6.3" fill="url(#rr)"/><rect x="2.6" y="5.6" width="8.8" height="2.8" fill="#fff"/></svg><div class="a" style="left:44px;top:463px;width:3px;height:16px;border-left:1px solid #f8f6f2;border-right:1px solid #f8f6f2;background:#9c8c7c"></div><div class="a" style="left:51px;top:466px;font-size:10px;letter-spacing:-0.15px;line-height:12px;white-space:nowrap;color:#1a1a1a;">Trigger</div><div class="a" style="left:84px;top:462px;width:62px;height:16px;background:#fff;border:1px solid #ebe7df"></div><div class="a" style="left:88px;top:464px;font-size:9.5px;letter-spacing:0.15px;line-height:12px;white-space:nowrap;color:#1a1a1a;">Auto</div><div class="a" style="left:132px;top:463px;width:13px;height:14px;border:1px solid #a39381;border-radius:2px;background:linear-gradient(#f8f6f0,#e9e3d6)"><svg class="a" style="left:2px;top:4px" width="7" height="5" viewBox="0 0 7 5"><path d="M0.5 0.8 L3.5 3.8 L6.5 0.8" stroke="#7c6f62" stroke-width="1.1" fill="none"/></svg></div><svg class="a" style="left:146px;top:460px" width="24" height="20" viewBox="0 0 24 20">
<rect x="9" y="5" width="6" height="12" fill="#c8e0f8"/>
<path d="M4 13.3 H7.5 V8.5 H11 C11.8 8.5 12 9.5 12 10.5 V13.3 H17" stroke="#1a1a1a" stroke-width="1.2" fill="none"/>
<path d="M13.8 3.8 L16.5 2.8 L17.3 6 L14.6 7 Z" fill="#000" stroke="#000" stroke-width="0.8"/><path d="M12.5 8.5 L14.5 6.2" stroke="#000" stroke-width="1"/>
<ellipse cx="12" cy="11.3" rx="1.4" ry="1.8" fill="#18d018"/></svg><div class="a" style="left:167px;top:463px;width:3px;height:16px;border-left:1px solid #f8f6f2;border-right:1px solid #f8f6f2;background:#9c8c7c"></div><div class="a" style="left:173px;top:462px;width:61px;height:16px;background:#fff;border:1px solid #ebe7df"></div><div class="a" style="left:177px;top:464px;font-size:9.5px;letter-spacing:0.5px;line-height:12px;white-space:nowrap;color:#1a1a1a;">A</div><div class="a" style="left:220px;top:463px;width:13px;height:14px;border:1px solid #a39381;border-radius:2px;background:linear-gradient(#f8f6f0,#e9e3d6)"><svg class="a" style="left:2px;top:4px" width="7" height="5" viewBox="0 0 7 5"><path d="M0.5 0.8 L3.5 3.8 L6.5 0.8" stroke="#7c6f62" stroke-width="1.1" fill="none"/></svg></div><div class="a" style="left:237px;top:463px;width:3px;height:16px;border-left:1px solid #f8f6f2;border-right:1px solid #f8f6f2;background:#9c8c7c"></div><div class="hl" style="left:241px;top:462px;width:18px;height:17px"></div><svg class="a" style="left:243px;top:464px" width="16" height="13" viewBox="0 0 16 13">
<path d="M1.8 10.5 L10.5 2.5 H13" stroke="#101010" stroke-width="1.1" fill="none"/>
<path d="M6.5 1.6 L7.9 4 V5.6 H5.1 V4 Z M6.5 11 L7.9 8.6 V7 H5.1 V8.6 Z" fill="#1a3af0"/></svg><svg class="a" style="left:261px;top:464px" width="16" height="13" viewBox="0 0 16 13">
<path d="M1.2 2.5 H3.5 L12.3 10.5" stroke="#101010" stroke-width="1.1" fill="none"/>
<path d="M7.5 1.6 L8.9 4 V5.6 H6.1 V4 Z M7.5 11 L8.9 8.6 V7 H6.1 V8.6 Z" fill="#1a3af0"/></svg><div class="a" style="left:278px;top:463px;width:3px;height:16px;border-left:1px solid #f8f6f2;border-right:1px solid #f8f6f2;background:#9c8c7c"></div><div class="a" style="left:284px;top:462px;width:62px;height:16px;background:#fff;border:1px solid #ebe7df"></div><div class="a" style="left:288px;top:464px;font-size:9.5px;letter-spacing:0.5px;line-height:12px;white-space:nowrap;color:#1a1a1a;">0</div><div class="a" style="left:295px;top:464px;font-size:9.5px;letter-spacing:0.3px;line-height:12px;white-space:nowrap;color:#1a1a1a;">V</div><div class="a" style="left:332px;top:463px;width:12px;height:14px;border:1px solid #a39381;border-radius:2px;background:linear-gradient(#f8f6f0,#e9e3d6)"><div class="a" style="left:0;top:6px;width:10px;height:1px;background:#a39381"></div><svg class="a" style="left:2px;top:1px" width="5" height="3" viewBox="0 0 5 3"><path d="M0.5 2.5 L2.5 0.5 L4.5 2.5" stroke="#8c8072" stroke-width="1" fill="none"/></svg><svg class="a" style="left:2px;top:8px" width="5" height="3" viewBox="0 0 5 3"><path d="M0.5 0.5 L2.5 2.5 L4.5 0.5" stroke="#8c8072" stroke-width="1" fill="none"/></svg></div><div class="a" style="left:348px;top:463px;width:3px;height:16px;border-left:1px solid #f8f6f2;border-right:1px solid #f8f6f2;background:#9c8c7c"></div><div class="a" style="left:355px;top:462px;width:62px;height:16px;background:#fff;border:1px solid #ebe7df"></div><div class="a" style="left:359px;top:464px;font-size:9.5px;letter-spacing:0.25px;line-height:12px;white-space:nowrap;color:#1a1a1a;">10 %</div><div class="a" style="left:403px;top:463px;width:12px;height:14px;border:1px solid #a39381;border-radius:2px;background:linear-gradient(#f8f6f0,#e9e3d6)"><div class="a" style="left:0;top:6px;width:10px;height:1px;background:#a39381"></div><svg class="a" style="left:2px;top:1px" width="5" height="3" viewBox="0 0 5 3"><path d="M0.5 2.5 L2.5 0.5 L4.5 2.5" stroke="#8c8072" stroke-width="1" fill="none"/></svg><svg class="a" style="left:2px;top:8px" width="5" height="3" viewBox="0 0 5 3"><path d="M0.5 0.5 L2.5 2.5 L4.5 0.5" stroke="#8c8072" stroke-width="1" fill="none"/></svg></div><svg class="a" style="left:418px;top:461px" width="20" height="18" viewBox="0 0 20 18">
<path d="M3 11.8 C3.8 8.5 5.2 6.6 6.8 8 L13.3 14.6 L16 11.8" stroke="#484848" stroke-width="0.95" fill="none" stroke-linejoin="round"/>
<path d="M4.4 4 V7.6 M4.4 5.6 H12.5" stroke="#1010f0" stroke-width="1.4" fill="none"/><path d="M11.6 3.4 L14.8 5.6 L11.6 7.8 Z" fill="#1010f0"/>
<circle cx="13.6" cy="8.6" r="1.6" fill="#d8d410" stroke="#707030" stroke-width="0.6"/></svg><div class="a" style="left:439px;top:462px;width:62px;height:16px;background:#f2f0ea;border:1px solid #e6e1d8"></div><div class="a" style="left:443px;top:464px;font-size:9.5px;letter-spacing:-0.15px;line-height:12px;white-space:nowrap;color:#c4c4c4;">0 s</div><div class="a" style="left:487px;top:463px;width:12px;height:14px;border:1px solid #d6d0c6;border-radius:2px;background:linear-gradient(#f6f4ee,#ebe6da)"><div class="a" style="left:0;top:6px;width:10px;height:1px;background:#d6d0c6"></div><svg class="a" style="left:2px;top:1px" width="5" height="3" viewBox="0 0 5 3"><path d="M0.5 2.5 L2.5 0.5 L4.5 2.5" stroke="#c8c2b8" stroke-width="1" fill="none"/></svg><svg class="a" style="left:2px;top:8px" width="5" height="3" viewBox="0 0 5 3"><path d="M0.5 0.5 L2.5 2.5 L4.5 0.5" stroke="#c8c2b8" stroke-width="1" fill="none"/></svg></div><div class="a" style="left:504px;top:463px;width:3px;height:16px;border-left:1px solid #f8f6f2;border-right:1px solid #f8f6f2;background:#9c8c7c"></div><svg class="a" style="left:509px;top:463px" width="14" height="14" viewBox="0 0 14 14">
<defs><linearGradient id="gp" x1="0" x2="0" y1="0" y2="1"><stop offset="0" stop-color="#48c048"/><stop offset="1" stop-color="#108010"/></linearGradient></defs>
<rect x="0.5" y="0.5" width="13" height="13" rx="1.5" fill="url(#gp)" stroke="#0a5a0a"/><path d="M7 2.8 V11.2 M2.8 7 H11.2" stroke="#fff" stroke-width="2.4"/></svg><svg class="a" style="left:527px;top:463px" width="14" height="14" viewBox="0 0 14 14">
<rect x="0.5" y="0.5" width="13" height="13" rx="1.5" fill="#bcdcb4" stroke="#a4cc9c"/><path d="M3 7 H11" stroke="#f0f8ec" stroke-width="2.2"/></svg><svg class="a" style="left:545px;top:463px" width="14" height="14" viewBox="0 0 14 14">
<rect x="0.5" y="0.5" width="13" height="13" rx="1.5" fill="#bcdcb4" stroke="#a4cc9c"/><path d="M2.5 9.5 L7 4.5 L11.5 9.5 Z" fill="#f0f8ec"/></svg></body></html>
